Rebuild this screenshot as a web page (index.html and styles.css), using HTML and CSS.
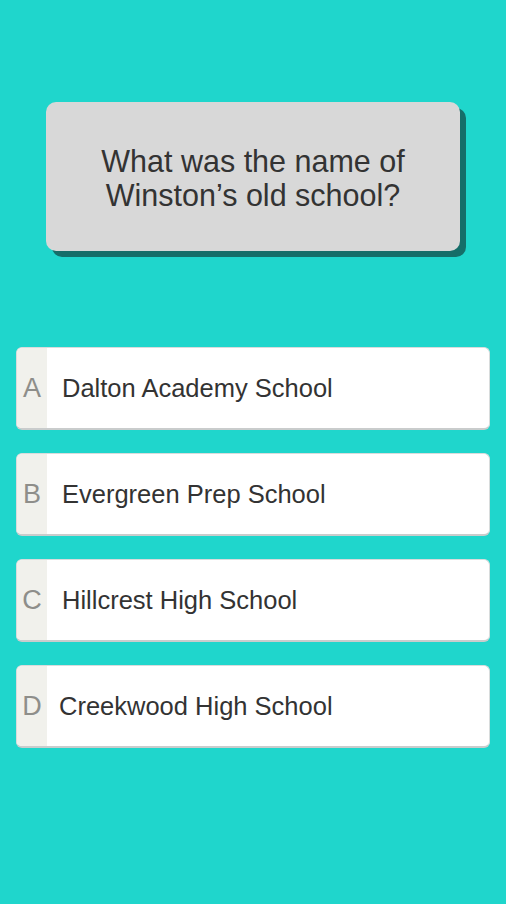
FILE: index.html
```html
<!DOCTYPE html>
<html>
<head>
<meta charset="utf-8">
<link rel="stylesheet" href="styles.css">
</head>
<body>
<div class="screen">
  <div class="question">
    <p>What was the name of<br>Winston’s old school?</p>
  </div>
  <div class="answers">
    <div class="answer"><span class="letter">A</span><span class="text">Dalton Academy School</span></div>
    <div class="answer"><span class="letter">B</span><span class="text">Evergreen Prep School</span></div>
    <div class="answer"><span class="letter">C</span><span class="text">Hillcrest High School</span></div>
    <div class="answer"><span class="letter">D</span><span class="text shift">Creekwood High School</span></div>
  </div>
</div>
</body>
</html>
```
FILE: styles.css
```css
html, body {
  margin: 0;
  padding: 0;
  background: #1fd6cc;
}
.screen {
  width: 506px;
  height: 904px;
  box-sizing: border-box;
  padding-top: 102px;
  font-family: "Liberation Sans", Arial, sans-serif;
}
.question {
  margin-left: 46px;
  width: 414px;
  height: 149px;
  box-sizing: border-box;
  background: #d8d8d8;
  border-radius: 10px;
  box-shadow: 6px 6px 0 #156e69;
  display: flex;
  align-items: center;
  justify-content: center;
}
.question p {
  margin: 0;
  text-align: center;
  font-size: 30.5px;
  line-height: 34px;
  color: #333;
  padding-top: 2px;
}
.answers {
  margin-top: 96px;
  display: flex;
  flex-direction: column;
  gap: 23px;
  padding-left: 16px;
}
.answer {
  width: 474px;
  height: 83px;
  box-sizing: border-box;
  background: #fff;
  border: 1px solid #d8dcdc;
  border-bottom: 2px solid #c9cccc;
  border-radius: 6px;
  display: flex;
  align-items: center;
  overflow: hidden;
}
.letter {
  width: 30px;
  align-self: stretch;
  background: #f1f1ec;
  display: flex;
  align-items: center;
  justify-content: center;
  font-size: 27px;
  color: #8e8e8a;
  padding-top: 1px;
}
.text {
  margin-left: 15px;
  font-size: 25.5px;
  color: #333;
}
.text.shift {
  margin-left: 12px;
}
```
